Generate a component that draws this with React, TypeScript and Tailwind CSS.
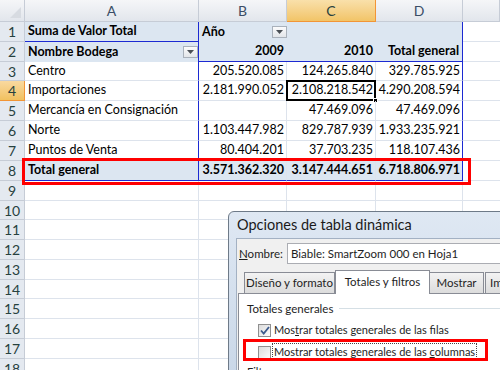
import type { ReactNode } from "react";

type Row = {
  n: number;
  a?: ReactNode;
  b?: string;
  c?: string;
  d?: string;
  kind?: "head1" | "head2" | "data" | "total" | "empty";
};

const rows: Row[] = [
  { n: 1, kind: "head1" },
  { n: 2, kind: "head2" },
  { n: 3, a: "Centro", b: "205.520.085", c: "124.265.840", d: "329.785.925", kind: "data" },
  { n: 4, a: "Importaciones", b: "2.181.990.052", c: "2.108.218.542", d: "4.290.208.594", kind: "data" },
  { n: 5, a: "Mercancía en Consignación", b: "", c: "47.469.096", d: "47.469.096", kind: "data" },
  { n: 6, a: "Norte", b: "1.103.447.982", c: "829.787.939", d: "1.933.235.921", kind: "data" },
  { n: 7, a: "Puntos de Venta", b: "80.404.201", c: "37.703.235", d: "118.107.436", kind: "data" },
  { n: 8, a: "Total general", b: "3.571.362.320", c: "3.147.444.651", d: "6.718.806.971", kind: "total" },
  ...Array.from({ length: 10 }, (_, i) => ({ n: 9 + i, kind: "empty" as const })),
];

function DropBtn() {
  return (
    <div className="flex h-[12px] w-[15px] items-center justify-center border border-[#a9b1bb] bg-gradient-to-b from-[#fbfbfc] to-[#e3e6ea]">
      <svg width="7" height="4" viewBox="0 0 7 4">
        <path d="M0 0h7L3.5 4z" fill="#4a4f55" />
      </svg>
    </div>
  );
}

function RowHead({ n }: { n: number }) {
  const sel = n === 4;
  return (
    <div
      className={`flex w-[25px] shrink-0 items-center justify-center border-b border-r text-[14px] ${
        sel
          ? "border-[#f29536] bg-gradient-to-b from-[#f9d99f] to-[#f1c15f] text-[#27413e]"
          : "border-[#c6ccd6] bg-[#e4e9f0] text-[#27413e]"
      }`}
    >
      {n}
    </div>
  );
}

function Sheet() {
  return (
    <div className="flex flex-col whitespace-nowrap font-['Lato',sans-serif] text-[12.5px] text-black">
      {/* column headers */}
      <div className="flex h-[22px]">
        <div className="relative w-[25px] shrink-0 border-b border-r border-[#c6ccd6] bg-gradient-to-b from-[#f5f6f8] to-[#e2e6ec]">
          <svg className="absolute bottom-[3px] right-[3px]" width="11" height="11" viewBox="0 0 11 11">
            <path d="M11 0v11H0z" fill="#d7dbe1" />
          </svg>
        </div>
        {[
          ["A", "w-[174px]"],
          ["B", "w-[88px]"],
          ["C", "w-[89px]"],
          ["D", "w-[87px]"],
          ["", "flex-1"],
        ].map(([l, w]) => (
          <div
            key={l + w}
            className={`${w} flex items-center justify-center border-b border-r text-[14px] ${
              l === "C"
                ? "border-[#f29536] bg-gradient-to-b from-[#f9e0aa] to-[#f2c467] text-[#27413e]"
                : "border-[#c6ccd6] bg-gradient-to-b from-[#f5f6f8] to-[#e2e6ec] text-[#3b4d66]"
            }`}
          >
            {l}
          </div>
        ))}
      </div>
      {rows.map((r) => {
        const h = r.n === 3 || r.n === 10 || r.n === 14 ? "h-[19px]" : "h-[20px]";
        if (r.kind === "empty") {
          return (
            <div key={r.n} className={`flex ${h}`}>
              <RowHead n={r.n} />
              <div className="w-[174px] border-b border-r border-[#dde3ec]" />
              <div className="w-[88px] border-b border-r border-[#dde3ec]" />
              <div className="w-[89px] border-b border-r border-[#dde3ec]" />
              <div className="w-[87px] border-b border-r border-[#dde3ec]" />
              <div className="flex-1 border-b border-[#dde3ec]" />
            </div>
          );
        }
        if (r.kind === "head1") {
          return (
            <div key={r.n} className={`flex ${h}`}>
              <RowHead n={1} />
              <div className="flex w-[174px] items-center border-b border-r border-b-[#1c2ad2] border-r-[#1c2ad2] bg-[#dce6f1] pl-[3px] font-bold">
                Suma de Valor Total
              </div>
              <div className="flex w-[88px] items-center justify-between bg-[#dce6f1] pl-[3px]">
                <span className="font-bold">Año</span>
                <DropBtn />
              </div>
              <div className="w-[89px] bg-[#dce6f1]" />
              <div className="w-[87px] border-r border-[#1c2ad2] bg-[#dce6f1]" />
              <div className="flex-1 border-b border-[#dde3ec]" />
            </div>
          );
        }
        if (r.kind === "head2") {
          return (
            <div key={r.n} className={`flex ${h}`}>
              <RowHead n={2} />
              <div className="flex w-[174px] items-center justify-between border-r border-[#1c2ad2] bg-[#dce6f1] pl-[3px] font-bold">
                <span>Nombre Bodega</span>
                <DropBtn />
              </div>
              <div className="flex w-[88px] items-center justify-end border-b border-[#1c2ad2] bg-[#dce6f1] pr-[3px] font-bold">
                2009
              </div>
              <div className="flex w-[89px] items-center justify-end border-b border-[#1c2ad2] bg-[#dce6f1] pr-[3px] font-bold">
                2010
              </div>
              <div className="flex w-[87px] items-center justify-end border-b border-r border-[#1c2ad2] bg-[#dce6f1] pr-[3px] font-bold">
                Total general
              </div>
              <div className="flex-1 border-b border-[#dde3ec]" />
            </div>
          );
        }
        const total = r.kind === "total";
        const bg = total ? "bg-[#dce6f1] font-bold" : "";
        const bb = total ? "border-b-[#1c2ad2]" : "border-b-[#dde3ec]";
        return (
          <div key={r.n} className={`flex ${h}`}>
            <RowHead n={r.n} />
            <div className={`flex w-[174px] items-center border-b border-r border-r-[#1c2ad2] pl-[3px] ${bb} ${bg}`}>
              {r.a}
            </div>
            <div className={`flex w-[88px] items-center justify-end border-b border-r border-r-[#dde3ec] pr-[2px] ${bb} ${bg}`}>
              {r.b}
            </div>
            <div className={`relative flex w-[89px] items-center justify-end border-b border-r border-r-[#dde3ec] pr-[2px] ${bb} ${bg}`}>
              {r.c}
              {r.n === 4 && (
                <>
                  <div className="absolute -left-[1px] -top-[1px] bottom-[-1px] right-[-1px] border-2 border-black" />
                  <div className="absolute -bottom-[3px] -right-[3px] h-[5px] w-[5px] border border-white bg-black" />
                </>
              )}
            </div>
            <div className={`flex w-[87px] items-center justify-end border-b border-r border-r-[#1c2ad2] pr-[2px] ${bb} ${bg}`}>
              {r.d}
            </div>
            <div className="flex-1 border-b border-[#dde3ec]" />
          </div>
        );
      })}
    </div>
  );
}

function Checkbox({ checked }: { checked?: boolean }) {
  return (
    <div className="flex h-[13px] w-[13px] shrink-0 items-center justify-center border border-[#8f8f8f] bg-gradient-to-br from-[#dcdcdc] to-[#fbfbfb]">
      {checked && (
        <svg width="10" height="9" viewBox="0 0 10 9">
          <path d="M1 4.5l2.7 3L9 1" fill="none" stroke="#3c5a8c" strokeWidth="1.8" />
        </svg>
      )}
    </div>
  );
}

function Dialog() {
  return (
    <div className="absolute left-[228px] top-[211px] h-[170px] w-[290px] whitespace-nowrap rounded-tl-[6px] border border-[#6e7a88] bg-gradient-to-b from-[#dfe8f3] to-[#c9d7e8] pl-[7px] font-['Lato',sans-serif] text-[11px] text-[#1e1e1e]">
      <div className="flex h-[26px] items-center pl-[1px] text-[14.5px] text-[#1a1a1a]">Opciones de tabla dinámica</div>
      <div className="h-full border-l border-t border-[#a3b1c3] bg-[#f0f0f0] pl-[1px] pt-[4px]">
        <div className="flex items-center gap-[4px]">
          <span className="pl-[1px] text-[11.5px]">
            <span className="underline">N</span>ombre:
          </span>
          <div className="flex h-[21px] flex-1 items-center border border-[#abadb3] bg-white pl-[3px] text-[11.5px]">
            Biable: SmartZoom 000 en Hoja1
          </div>
        </div>
        <div className="mt-[6px] flex items-end pl-[6px] text-[11.5px]">
          <div className="flex h-[21px] w-[91px] items-center justify-center border border-b-0 border-[#898c95] bg-gradient-to-b from-[#f3f3f3] to-[#dcdcdc]">
            Diseño y formato
          </div>
          <div className="relative z-10 -mb-[1px] flex h-[24px] w-[95px] items-center justify-center border border-b-0 border-[#898c95] bg-white pb-[2px]">
            Totales y filtros
          </div>
          <div className="flex h-[21px] w-[54px] items-center justify-center border border-b-0 border-l-0 border-[#898c95] bg-gradient-to-b from-[#f3f3f3] to-[#dcdcdc]">
            Mostrar
          </div>
          <div className="ml-[1px] flex h-[21px] flex-1 items-center overflow-hidden border border-b-0 border-[#898c95] bg-gradient-to-b from-[#f3f3f3] to-[#dcdcdc] pl-[4px]">
            Im
          </div>
        </div>
        <div className="h-full border-l border-t border-[#898c95] bg-white pl-[8px] pt-[6px]">
          <div className="flex items-center gap-[6px] text-[11.5px]">
            <span>Totales generales</span>
            <div className="h-px flex-1 bg-[#d5dfe5]" />
          </div>
          <div className="mt-[5px] flex items-center gap-[3px] pl-[11px]">
            <Checkbox checked />
            <span>
              Mos<span className="underline">t</span>rar totales generales de las filas
            </span>
          </div>
          <div className="mt-[4px] flex items-center gap-[1px] pl-[11px]">
            <Checkbox />
            <span className="border border-dotted border-[#444] px-[1px]">
              Mostrar totales generales de las <span className="underline">c</span>olumnas
            </span>
          </div>
          <div className="mt-[3px]">Filtros</div>
        </div>
      </div>
    </div>
  );
}

export default function App() {
  return (
    <div className="relative h-[370px] w-[500px] overflow-hidden bg-white">
      <Sheet />
      <div className="absolute left-[22px] top-[158px] h-[27px] w-[449px] border-[3px] border-[#ff0000]" />
      <Dialog />
      <div className="absolute left-[243px] top-[339px] h-[22px] w-[245px] border-[3px] border-[#ff0000]" />
    </div>
  );
}
